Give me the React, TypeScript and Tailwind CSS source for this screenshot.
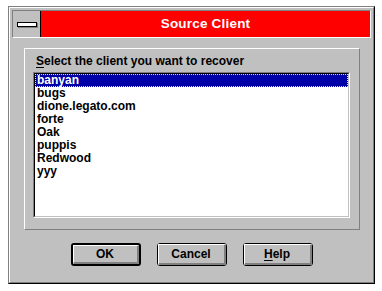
import React from "react";

const clients = ["banyan", "bugs", "dione.legato.com", "forte", "Oak", "puppis", "Redwood", "yyy"];

function DlgButton({ children, isDefault = false }: { children: React.ReactNode; isDefault?: boolean }) {
  return (
    <button
      type="button"
      className={
        "w-[70px] h-[23px] rounded-[3px] border-black bg-[#c0c0c0] p-0 " +
        (isDefault ? "border-2" : "border")
      }
    >
      <div className="h-full w-full flex items-center justify-center text-[12px] font-bold text-black border-t border-l border-white border-r-2 border-b-2 border-r-[#808080] border-b-[#808080]">
        {children}
      </div>
    </button>
  );
}

export default function App() {
  const selected = "banyan";

  return (
    <div className="w-[382px] h-[291px] bg-white pt-[6px] pl-[8px] font-['Liberation_Sans',Arial,sans-serif]">
      {/* dialog frame */}
      <div className="w-[367px] h-[278px] bg-[#c0c0c0] border border-[#808080] border-r-black border-b-black">
        <div className="h-full border border-white border-r-[#808080] border-b-[#808080] p-[2px] flex flex-col">
          {/* title bar */}
          <div className="h-[28px] flex border border-[#808080] border-r-white border-b-white">
            <div className="w-[28px] flex items-center justify-center border-r border-black">
              <div className="w-[20px] h-[5px] bg-white border border-black shadow-[1px_1px_0_#808080]" />
            </div>
            <div className="flex-1 bg-[#ff0000] flex items-center justify-center text-white font-bold text-[13.5px] tracking-[0.2px]">
              Source Client
            </div>
          </div>

          {/* group box */}
          <div className="mt-[10px] ml-[12px] w-[336px] h-[182px] border border-white border-r-[#808080] border-b-[#808080] pt-[5px] pl-[8px]">
            <div className="ml-[3px] text-[12px] leading-[14px] font-bold text-black">
              <span className="underline underline-offset-2">S</span>elect the client you want to recover
            </div>
            <div className="mt-[4px] w-[317px] h-[146px] border border-[#808080] border-r-white border-b-white">
              <div className="h-full bg-white border border-black border-r-[#c0c0c0] border-b-[#c0c0c0]">
                {clients.map((c) => (
                  <div
                    key={c}
                    className={
                      "h-[13px] leading-[11px] text-[12px] font-bold px-[1px] border " +
                      (c === selected
                        ? "bg-[#0000a8] text-white border-dotted border-[#ffff00]"
                        : "text-black border-transparent")
                    }
                  >
                    {c}
                  </div>
                ))}
              </div>
            </div>
          </div>

          {/* buttons */}
          <div className="mt-[13px] flex justify-center gap-[16px]">
            <DlgButton isDefault>OK</DlgButton>
            <DlgButton>Cancel</DlgButton>
            <DlgButton>
              <span className="underline underline-offset-2">H</span>elp
            </DlgButton>
          </div>
        </div>
      </div>
    </div>
  );
}
